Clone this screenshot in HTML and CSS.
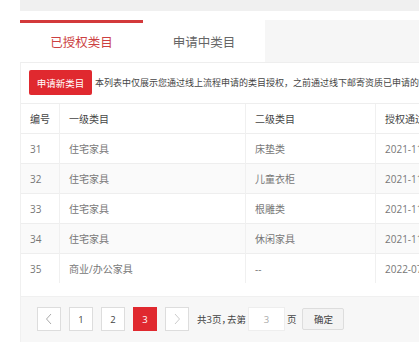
FILE: index.html
```
<!DOCTYPE html>
<html lang="zh-CN">
<head>
  <meta charset="UTF-8">
  <meta name="viewport" content="width=device-width, initial-scale=1.0">
  <title>类目管理</title>
  <link rel="stylesheet" href="styles.css">
</head>
<body>
  <div class="page">
    <div class="top-bar"></div>

    <div class="tabs">
      <div class="tab active">已授权类目</div>
      <div class="tab">申请中类目</div>
    </div>

    <div class="panel">
      <div class="notice">
        <button class="btn-apply">申请新类目</button>
        <span>本列表中仅展示您通过线上流程申请的类目授权，之前通过线下邮寄资质已申请的类目不在此列表中展示</span>
      </div>

      <table class="list">
        <thead>
          <tr>
            <th class="c-no">编号</th>
            <th class="c-first">一级类目</th>
            <th class="c-second">二级类目</th>
            <th>授权通过时间</th>
          </tr>
        </thead>
        <tbody>
          <tr><td>31</td><td>住宅家具</td><td>床垫类</td><td>2021-11-08 10:21:33</td></tr>
          <tr><td>32</td><td>住宅家具</td><td>儿童衣柜</td><td>2021-11-08 10:21:33</td></tr>
          <tr><td>33</td><td>住宅家具</td><td>根雕类</td><td>2021-11-08 10:21:33</td></tr>
          <tr><td>34</td><td>住宅家具</td><td>休闲家具</td><td>2021-11-08 10:21:33</td></tr>
          <tr><td>35</td><td>商业/办公家具</td><td>--</td><td>2022-07-15 14:02:51</td></tr>
        </tbody>
      </table>

      <div class="pager">
        <span class="pg-btn arrow">
          <svg width="8" height="12" viewBox="0 0 8 12"><path d="M6 1 L1.5 6 L6 11" fill="none" stroke="#aaa" stroke-width="1"/></svg>
        </span>
        <span class="pg-btn">1</span>
        <span class="pg-btn">2</span>
        <span class="pg-btn current">3</span>
        <span class="pg-btn arrow">
          <svg width="8" height="12" viewBox="0 0 8 12"><path d="M2 1 L6.5 6 L2 11" fill="none" stroke="#ccc" stroke-width="1"/></svg>
        </span>
        <span class="pg-text">共3页<span class="comma">，</span>去第</span>
        <input class="pg-input" type="text" value="3">
        <span class="pg-text">页</span>
        <button class="pg-ok">确定</button>
      </div>
    </div>
  </div>
</body>
</html>
```

FILE: styles.css
```
body {
  margin: 0;
  background: #fff;
  font-family: "Open Sans", "Noto Sans CJK SC", sans-serif;
  color: #333;
  overflow: hidden;
}
.page {
  padding-left: 20px;
  width: 640px;
}
.top-bar {
  height: 11px;
  background: #f0f0f0;
}
.tabs {
  display: flex;
  margin-top: 9px;
  background: #f6f6f6;
  height: 42px;
}
.tab {
  width: 122px;
  box-sizing: border-box;
  border-top: 3px solid transparent;
  background: #fff;
  text-align: center;
  font-size: 12.5px;
  line-height: 40px;
  color: #666;
}
.tab.active {
  width: 123px;
  border-top-color: #d3393b;
  color: #cc3f42;
}
.panel {
  background: #fff;
  border-top: 1px solid #eee;
  border-left: 1px solid #f0f0f0;
}
.notice {
  display: flex;
  align-items: center;
  gap: 3px;
  padding: 7px 0 0 8px;
  font-size: 9px;
  color: #444;
  white-space: nowrap;
}
.btn-apply {
  width: 63px;
  height: 25px;
  padding: 0;
  border: none;
  border-radius: 2px;
  background: #e0292f;
  color: #fff;
  font-family: inherit;
  font-size: 9.5px;
}
.list {
  width: 100%;
  margin-top: 8px;
  border-collapse: collapse;
  font-size: 10px;
}
.list th, .list td {
  height: 29px;
  padding: 0 0 0 9px;
  text-align: left;
  border-top: 1px solid #eee;
  border-left: 1px solid #f0f0f0;
  white-space: nowrap;
}
.list th:first-child, .list td:first-child {
  border-left: none;
}
.list th {
  font-weight: normal;
  color: #444;
}
.list td {
  color: #777;
}
.list tbody tr:nth-child(even) td {
  background: #fafafa;
}
.c-no { width: 29px; }
.c-first { width: 176px; }
.c-second { width: 120px; }
.pager {
  display: flex;
  align-items: center;
  gap: 8px;
  margin-top: 13px;
  padding: 10px 0 20px 16px;
  background: #f7f7f7;
  border-top: 1px solid #f0f0f0;
  font-size: 9.5px;
}
.pg-btn {
  display: flex;
  align-items: center;
  justify-content: center;
  width: 24px;
  height: 24px;
  box-sizing: border-box;
  border: 1px solid #ddd;
  background: #fff;
  color: #444;
}
.pg-btn.current {
  background: #e0292f;
  border-color: #e0292f;
  color: #fff;
}
.pg-text {
  color: #444;
}
.comma {
  letter-spacing: -4px;
}
.pg-input {
  width: 37px;
  height: 24px;
  box-sizing: border-box;
  margin: 0 -6px 0 -6px;
  border: 1px solid #eee;
  text-align: center;
  font-family: inherit;
  font-size: 9.5px;
  color: #aaa;
}
.pg-ok {
  width: 42px;
  height: 22px;
  margin-left: -2px;
  padding: 0;
  border: 1px solid #ddd;
  border-radius: 2px;
  background: #f3f3f3;
  color: #444;
  font-family: inherit;
  font-size: 9.5px;
}
```
